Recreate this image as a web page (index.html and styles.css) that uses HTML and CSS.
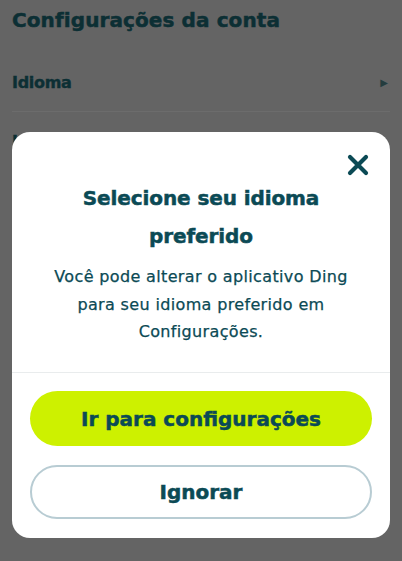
FILE: index.html
```html
<!DOCTYPE html>
<html lang="pt">
<head>
<meta charset="utf-8">
<link rel="stylesheet" href="styles.css">
</head>
<body>
<div class="screen">
  <h1 class="page-title">Configurações da conta</h1>
  <div class="row">
    <span class="row-label">Idioma</span>
    <span class="row-arrow">&#9654;</span>
  </div>
  <div class="row row-partial"><span class="row-label">I</span></div>

  <div class="overlay">
    <div class="dialog">
      <div class="dialog-top">
        <button class="close" aria-label="Fechar">
          <svg width="22" height="22" viewBox="0 0 22 22"><path d="M3 3 L19 19 M19 3 L3 19" stroke="#0b4a55" stroke-width="4.2" stroke-linecap="round"/></svg>
        </button>
        <h2 class="dialog-title">Selecione seu idioma preferido</h2>
        <p class="dialog-text">Você pode alterar o aplicativo Ding para seu idioma preferido em Configurações.</p>
      </div>
      <div class="dialog-actions">
        <button class="btn btn-primary">Ir para configurações</button>
        <button class="btn btn-outline">Ignorar</button>
      </div>
    </div>
  </div>
</div>
</body>
</html>
```

FILE: styles.css
```css
* { box-sizing: border-box; margin: 0; padding: 0; }
html, body { width: 402px; height: 561px; overflow: hidden; }
body { background: #646464; font-family: "DejaVu Sans", "Inter", sans-serif; }
.screen { position: relative; width: 402px; height: 561px; padding: 0 12px; }
.page-title { font-size: 20px; font-weight: 700; color: #0c2f34; padding-top: 6px; line-height: 28px; letter-spacing: 0.1px; -webkit-text-stroke: 0.5px #0c2f34; }
.row { display: flex; justify-content: space-between; align-items: center; height: 58px; margin-top: 20px; border-bottom: 1px solid #6c6c6c; }
.row-label { font-size: 16px; font-weight: 700; color: #0c2f34; letter-spacing: -0.3px; -webkit-text-stroke: 0.4px #0c2f34; }
.row-arrow { font-size: 10px; color: #243c3e; margin-right: 2px; }
.row-partial { margin-top: 0; border: 0; }
.overlay { position: absolute; inset: 0; padding: 132px 12px 0; }
.dialog { background: #fff; border-radius: 18px; height: 406px; overflow: hidden; display: flex; flex-direction: column; }
.dialog-top { position: relative; padding: 47px 33px 0; height: 241px; border-bottom: 1px solid #e9eced; text-align: center; }
.close { position: absolute; right: 21px; top: 22px; background: none; border: 0; width: 22px; height: 22px; display: flex; }
.dialog-title { font-size: 20px; font-weight: 700; color: #0b4a55; line-height: 38px; padding: 0 31px; letter-spacing: -0.1px; -webkit-text-stroke: 0.5px #0b4a55; }
.dialog-text { margin-top: 8px; font-size: 16px; font-weight: 400; color: #0b4a55; line-height: 27.5px; letter-spacing: 0.35px; -webkit-text-stroke: 0.25px #0b4a55; }
.dialog-actions { padding: 18px 18px 0; display: flex; flex-direction: column; gap: 19px; }
.btn { height: 55px; border-radius: 28px; font-family: inherit; font-size: 20px; font-weight: 700; color: #0b4a55; letter-spacing: 0; -webkit-text-stroke: 0.5px #0b4a55; }
.btn-primary { background: #cdf100; border: 0; }
.btn-outline { background: #fff; border: 2px solid #b8ccd3; height: 54px; }
```
